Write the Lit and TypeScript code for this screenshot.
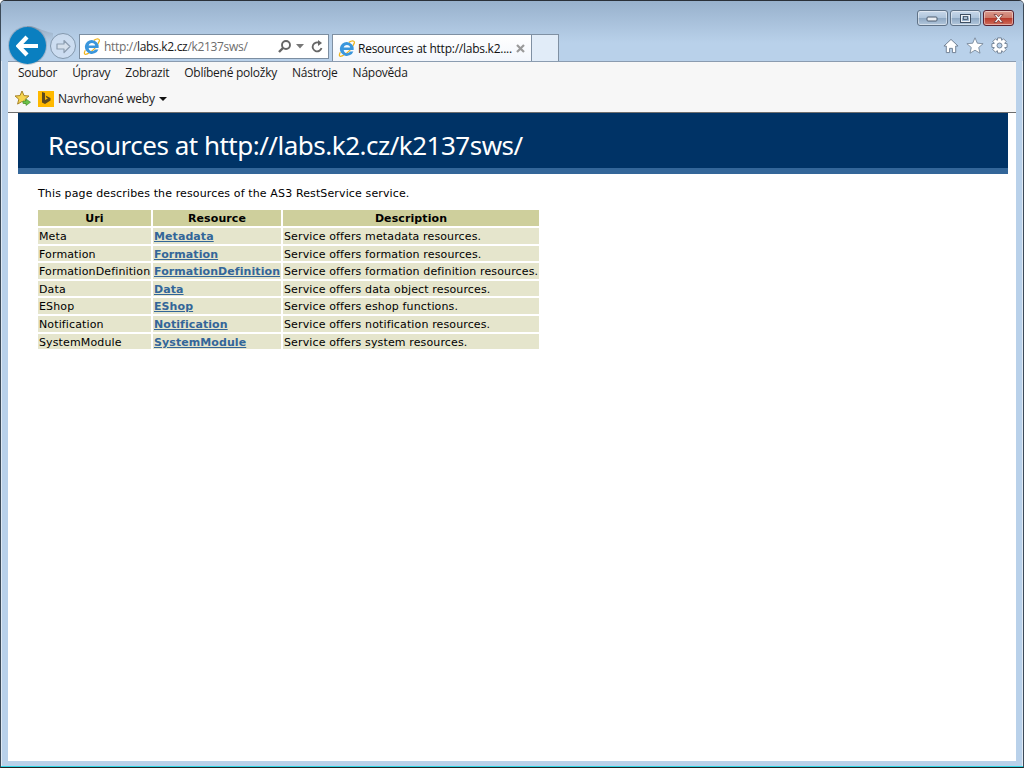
import { LitElement, html, css } from "lit";
import { customElement } from "lit/decorators.js";

const ieLogo = (s: number) => html`<svg width=${s} height=${s} viewBox="0 0 18 18" style="flex:none">
  <path d="M2.500 13C.5 16.500 1.500 18 4.500 16.800 9 15 15 9.500 17.200 3.500 18 .8 15.500 0 11.500 2.500" fill="none" stroke="#efb41c" stroke-width="1.300"/>
  <path d="M9.300 2a7.400 7.400 0 0 1 7.200 8.600H6c.2 2.200 1.700 3.300 3.500 3.300 1.400 0 2.500-.6 3.100-1.800h3.700A7.400 7.400 0 1 1 9.300 2zM6 8h6.900C12.700 6.300 11.400 5.200 9.500 5.200S6.300 6.300 6 8z" fill="#3a96dc" fill-rule="evenodd"/>
</svg>`;

const gearPath = (() => {
  const pts: string[] = [];
  const c = 8.5;
  for (let i = 0; i < 8; i++) {
    const a = (i * Math.PI) / 4;
    const offs: [number, number][] = [[-0.39, 5.6], [-0.24, 7.8], [0.24, 7.8], [0.39, 5.6]];
    for (const [d, r] of offs) {
      pts.push(`${(c + r * Math.cos(a + d)).toFixed(2)} ${(c + r * Math.sin(a + d)).toFixed(2)}`);
    }
  }
  return `M${pts.join("L")}Z M11 8.500a2.500 2.500 0 1 0-5 0 2.500 2.500 0 1 0 5 0Z`;
})();

const rows = [
  ["Meta", "Metadata", "Service offers metadata resources."],
  ["Formation", "Formation", "Service offers formation resources."],
  ["FormationDefinition", "FormationDefinition", "Service offers formation definition resources."],
  ["Data", "Data", "Service offers data object resources."],
  ["EShop", "EShop", "Service offers eshop functions."],
  ["Notification", "Notification", "Service offers notification resources."],
  ["SystemModule", "SystemModule", "Service offers system resources."],
];
const menu = ["Soubor", "Úpravy", "Zobrazit", "Oblíbené položky", "Nástroje", "Nápověda"];

@customElement("app-root")
export class AppRoot extends LitElement {
  static styles = css`
    :host { display: block; width: 1024px; height: 768px; background: #fff; overflow: hidden; }
    .window { box-sizing: border-box; height: 768px; display: flex; flex-direction: column;
      background: #b9d1ea; border: 1px solid #3c4a58; border-top-color: #2a3038; border-bottom: 1px solid #222;
      border-radius: 5px 5px 0 0; box-shadow: inset 0 -1px 0 #2fd6e6, inset 1px 0 0 #dfe9f4, inset -1px 0 0 #dfe9f4; }
    .chrome { height: 60px; flex: none; display: flex; flex-direction: column;
      background: linear-gradient(#98b1cc 0, #b9d1ea 42px); border-radius: 4px 4px 0 0; }
    .caption { height: 25px; box-sizing: border-box; padding: 9px 9px 0 0; display: flex; justify-content: flex-end; gap: 2px; flex: none; }
    .cap { width: 31px; height: 16px; box-sizing: border-box; border: 1px solid #5f7287; border-radius: 3px;
      background: linear-gradient(#c8d8ea 0, #afc5dc 48%, #8ea8c3 52%, #b3c8dd 100%); display: flex; align-items: center; justify-content: center;
      box-shadow: inset 0 0 0 1px rgba(255,255,255,.45); }
    .cap.close { border-color: #5a2230; background: linear-gradient(#dc9a8e 0, #cc7a6a 48%, #b8392a 52%, #cf6e5c 100%); }
    .nav { height: 35px; display: flex; align-items: flex-end; padding-left: 8px; position: relative; flex: none; }
    .back { width: 37px; height: 37px; border-radius: 50%; background: #0a7fc0; margin-bottom: -3px; flex: none; z-index: 2;
      display: flex; align-items: center; justify-content: center; box-shadow: 0 0 0 1px rgba(90,110,130,.3); }
    .swoosh { position: absolute; left: 26px; top: 0; z-index: 1; }
    .fwd { width: 26px; height: 26px; box-sizing: border-box; border: 1px solid #8398ad; border-radius: 50%; margin: 0 3px 2px 4px; flex: none; z-index: 2;
      display: flex; align-items: center; justify-content: center; background: rgba(220,232,245,.55); }
    .addr { width: 250px; height: 25px; margin-bottom: 2px; box-sizing: border-box; flex: none; background: #fff; border: 1px solid #7c8ea1;
      display: flex; align-items: center; padding: 0 4px 0 3px; font: 12px "Open Sans", sans-serif; color: #6d6d6d; letter-spacing: -0.32px; }
    .addr b { font-weight: 400; color: #1a1a1a; }
    .addr .url { margin-left: 4px; flex: 1; white-space: nowrap; }
    .addr .tools { display: flex; align-items: center; gap: 4px; }
    .tab { width: 200px; height: 27px; margin-left: 3px; box-sizing: border-box; flex: none; background: linear-gradient(#fff, #f2f6fc);
      border: 1px solid #7f90a3; border-bottom: none; display: flex; align-items: center; padding: 0 5px; gap: 3px;
      font: 12px "Open Sans", sans-serif; color: #111; letter-spacing: -0.25px; white-space: nowrap; }
    .tab span { flex: 1; }
    .newtab { width: 27px; height: 27px; box-sizing: border-box; flex: none; background: #e1ecf8; border: 1px solid #7f90a3; border-left: none; border-bottom: none; }
    .icons { margin-left: auto; display: flex; gap: 7px; align-items: center; padding: 0 15px 7px 0; }
    .body { flex: 1; display: flex; flex-direction: column; margin: 0 7px 6px 7px; min-height: 0; }
    .bars { height: 52px; flex: none; box-sizing: border-box; background: #f7f7f7; border-top: 1px solid #8b9cb0; border-bottom: 1px solid #6d6d6d;
      font: 12px "Open Sans", sans-serif; color: #1a1a1a; letter-spacing: -0.25px; }
    .menu { height: 21px; display: flex; gap: 15px; padding-left: 10px; align-items: center; }
    .fav { height: 29px; box-sizing: border-box; padding: 2px 0 0 6px; display: flex; align-items: center; }
    .bing { width: 16px; height: 16px; background: #ffb900; margin: 0 4px 0 6px; display: flex; align-items: center; justify-content: center; }
    .caret { width: 0; height: 0; border: 4px solid transparent; border-top: 4px solid #111; border-bottom: none; margin-left: 4px; }
    .page { flex: 1; background: #fff; padding: 0 8px 0 10px; font: 11px "DejaVu Sans", Verdana, sans-serif; color: #000; letter-spacing: 0.13px; }
    h1 { margin: 0; height: 61px; box-sizing: border-box; background: #003366; border-bottom: 6px solid #336699; color: #fff;
      font: 400 26px "Noto Sans", sans-serif; letter-spacing: -0.5px; line-height: 64px; padding-left: 30px; white-space: nowrap; }
    .content { padding: 0 0 0 20px; }
    p { margin: 13px 0 0; line-height: 13px; }
    table { border-collapse: separate; border-spacing: 2px; margin: 8px 0 0 -2px; table-layout: fixed; width: 505px; }
    th { background: #cecf9c; height: 16px; box-sizing: border-box; padding: 1px 0 0; text-align: center; font-weight: 700; line-height: 15px; letter-spacing: 0.1px; }
    td { background: #e5e5cc; height: 15.600px; box-sizing: border-box; padding: 2px 0 0 1px; line-height: 13.600px; white-space: nowrap; overflow: hidden; }
    td a { color: #336699; font-weight: 700; text-decoration: underline; letter-spacing: 0.08px; }
    .c1 { width: 113px; } .c2 { width: 128px; } .c3 { width: 256px; }
  `;

  render() {
    return html`<div class="window">
      <div class="chrome">
        <div class="caption">
          <div class="cap"><svg width="13" height="7" viewBox="0 0 13 7"><rect x="1" y="2" width="10" height="4" rx="1" fill="#e9edf2" stroke="#4d5d70"/></svg></div>
          <div class="cap"><svg width="13" height="11" viewBox="0 0 13 11"><rect x="1.500" y="1.500" width="10" height="8" fill="none" stroke="#3f4f62" stroke-width="1"/><rect x="2.500" y="2.500" width="8" height="6" fill="none" stroke="#eef2f6" stroke-width="1"/><rect x="4.500" y="3.500" width="4" height="3" fill="#a8bdd2" stroke="#3f4f62" stroke-width=".8"/></svg></div>
          <div class="cap close"><svg width="15" height="11" viewBox="0 0 15 11"><path d="M3 1.500h2.500l2 2.300 2-2.300H12L8.800 5.500 12 9.500H9.500l-2-2.300-2 2.300H3l3.200-4z" fill="#f3f3f3" stroke="#6a2a2a" stroke-width=".7"/></svg></div>
        </div>
        <div class="nav">
          <svg class="swoosh" width="30" height="24" viewBox="0 0 30 24">
            <defs><linearGradient id="sw" x1="0" y1="0" x2="0" y2="1"><stop offset="0" stop-color="#8fa1b5" stop-opacity=".9"/><stop offset="1" stop-color="#b9d1ea" stop-opacity="0"/></linearGradient></defs>
            <path d="M0 0C10 0 14 5 26 7L26 24H0z" fill="url(#sw)"/></svg>
          <div class="back"><svg width="24" height="22" viewBox="0 0 24 22"><path d="M11 2 2.500 11 11 20M3.500 11H22" fill="none" stroke="#fff" stroke-width="4.200"/></svg></div>
          <div class="fwd"><svg width="17" height="15" viewBox="0 0 17 15"><path d="M9 1.500l6 6-6 6v-3.500H2V5h7z" fill="#d5e0ec" stroke="#8c9db0" stroke-width="1.200" stroke-linejoin="round"/></svg></div>
          <div class="addr">${ieLogo(17)}
            <span class="url">http://<b>labs.k2.cz</b>/k2137sws/</span>
            <div class="tools">
              <svg width="15" height="15" viewBox="0 0 15 15"><circle cx="9" cy="6" r="4" fill="none" stroke="#666" stroke-width="1.900"/><path d="M6 9 2 13" stroke="#666" stroke-width="2.400"/></svg>
              <svg width="8" height="5" viewBox="0 0 8 5"><path d="M0 0h8L4 4.500z" fill="#777"/></svg>
              <svg width="13" height="14" viewBox="0 0 13 14" style="margin-left:3px"><path d="M10.500 8a4.500 4.500 0 1 1-2-5" fill="none" stroke="#666" stroke-width="1.800"/><path d="M7 0v6l4-3z" fill="#666"/></svg>
            </div>
          </div>
          <div class="tab">${ieLogo(17)}<span>Resources at http://labs.k2....</span>
            <svg width="11" height="11" viewBox="0 0 11 11"><path d="M2 2l7 7M9 2 2 9" stroke="#9a9a9a" stroke-width="2.200"/></svg></div>
          <div class="newtab"></div>
          <div class="icons">
            <svg width="16" height="16" viewBox="0 0 17 16"><path d="M8.500 1 1 8h2.500v7h3.500v-4.500h3V15h3.500V8H16z" fill="#fff" stroke="#6d7d90" stroke-width="1"/></svg>
            <svg width="18" height="17" viewBox="0 0 18 17"><path d="M9 .8l2.300 5.400 5.800.5-4.400 3.800 1.300 5.700L9 13.200l-5 3 1.300-5.700L.9 6.700l5.800-.5z" fill="#fff" stroke="#6d7d90" stroke-width=".8"/></svg>
            <svg width="17" height="17" viewBox="0 0 17 17"><path d=${gearPath} fill="#fff" fill-rule="evenodd" stroke="#6d7d90" stroke-width=".9"/></svg>
          </div>
        </div>
      </div>
      <div class="body">
        <div class="bars">
          <div class="menu">${menu.map((m) => html`<span>${m}</span>`)}</div>
          <div class="fav">
            <svg width="18" height="17" viewBox="0 0 18 17"><path d="M8 1l2 4.600 5 .4-3.800 3.200 1.200 4.900L8 11.500l-4.400 2.600 1.200-4.900L1 6l5-.4z" fill="#f5d44e" stroke="#a8842a" stroke-width="1"/><path d="M9 11h3V9l4.500 3.200L12 15.500v-2H9z" fill="#6cc24a" stroke="#3d8a2a" stroke-width=".6"/></svg>
            <div class="bing"><svg width="10" height="13" viewBox="0 0 10 13"><path d="M1 0l3 1v7l3-1.500-1.500-.7-1-2.300L9.500 6v2.500L4 12 1 10.500z" fill="#5d4a1e"/></svg></div>
            <span>Navrhované weby</span><div class="caret"></div>
          </div>
        </div>
        <div class="page">
          <h1>Resources at http://labs.k2.cz/k2137sws/</h1>
          <div class="content">
            <p>This page describes the resources of the AS3 RestService service.</p>
            <table>
              <colgroup><col class="c1" /><col class="c2" /><col class="c3" /></colgroup>
              <tr><th>Uri</th><th>Resource</th><th>Description</th></tr>
              ${rows.map((r) => html`<tr><td>${r[0]}</td><td><a href="#">${r[1]}</a></td><td>${r[2]}</td></tr>`)}
            </table>
          </div>
        </div>
      </div>
    </div>`;
  }
}
